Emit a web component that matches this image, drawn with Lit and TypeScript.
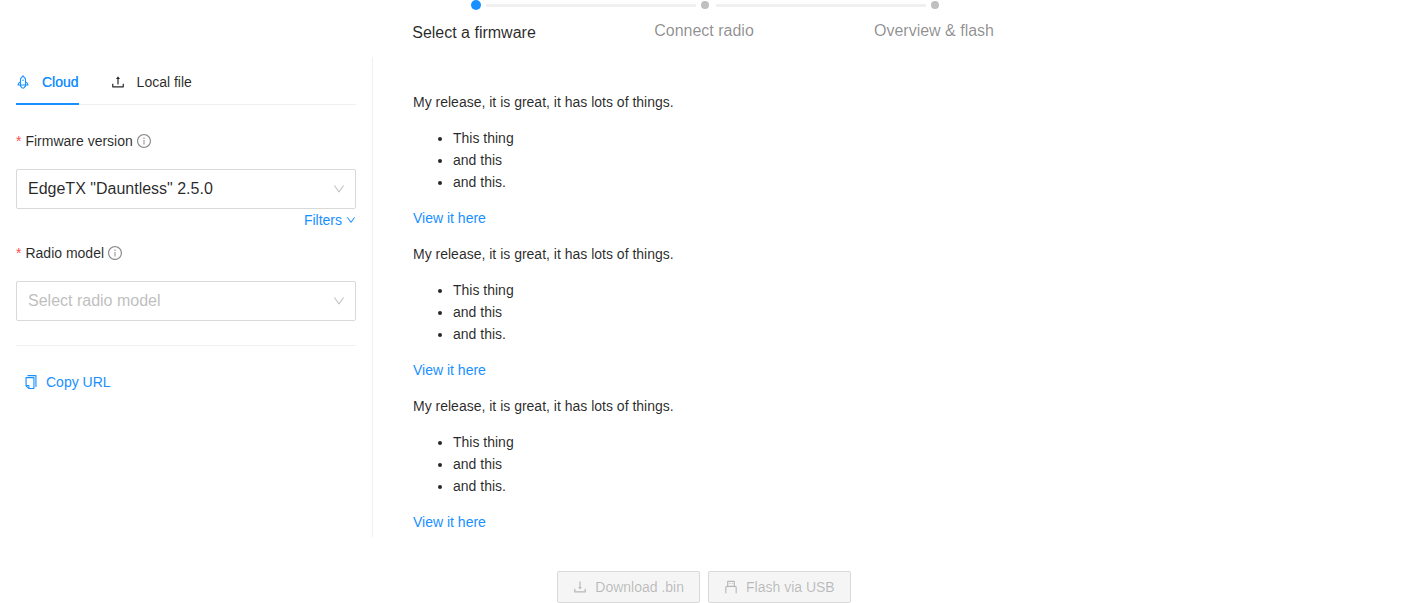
import { LitElement, html, css, svg } from "lit";
import { customElement, property, state } from "lit/decorators.js";
import { classMap } from "lit/directives/class-map.js";

const TRAY =
  "M878 626h-60c-4.4 0-8 3.6-8 8v154H214V634c0-4.4-3.6-8-8-8h-60c-4.4 0-8 3.6-8 8v198c0 17.7 14.3 32 32 32h684c17.7 0 32-14.3 32-32V634c0-4.4-3.6-8-8-8z";

const ICONS: Record<string, string[]> = {
  rocket: [
    "M864 736c0-111.6-65.4-208-160-252.9V317.3c0-15.1-5.3-29.7-15.1-41.2L536.5 95.4C530.1 87.8 521 84 512 84s-18.1 3.8-24.5 11.4L335.1 276.1a63.97 63.97 0 00-15.1 41.2v165.8C225.4 528 160 624.4 160 736h156.5c-2.3 7.2-3.5 15-3.5 23.8 0 22.1 7.6 43.7 21.4 60.8a97.2 97.2 0 0043.1 30.6c23.1 54 75.6 88.8 134.5 88.8 29.1 0 57.3-8.6 81.4-24.8 23.6-15.8 41.9-37.9 53-64a97 97 0 0043.1-30.5 97.52 97.52 0 0021.4-60.8c0-8.4-1.1-16.4-3.1-23.8H864zM762.3 621.4c9.4 14.6 17 30.3 22.5 46.6H700V558.7a211.6 211.6 0 0162.3 62.7zM388 483.1V318.8l124-147 124 147V668H388V483.1zM239.2 668c5.5-16.3 13.1-32 22.5-46.6 16.3-25.2 37.5-46.5 62.3-62.7V668h-84.8zm388.9 116.2c-5.2 3-11.2 4.2-17.1 3.4l-19.5-2.4-2.8 19.4c-5.4 37.9-38.4 66.5-76.7 66.5-38.3 0-71.3-28.6-76.7-66.5l-2.8-19.5-19.5 2.5a27.7 27.7 0 01-17.1-3.5c-8.7-5-14.1-14.3-14.1-24.4 0-10.6 5.9-19.4 14.6-23.8h231.3c8.8 4.5 14.6 13.3 14.6 23.8-.1 10.2-5.5 19.6-14.2 24.6zM464 400a48 48 0 1096 0 48 48 0 10-96 0z",
  ],
  upload: [
    "M400 317.7h73.9V656c0 4.4 3.6 8 8 8h60c4.4 0 8-3.6 8-8V317.7H624c6.7 0 10.4-7.7 6.3-12.9L518.3 163a8 8 0 00-12.6 0l-112 141.7c-4.1 5.3-.4 13 6.3 13z",
    TRAY,
  ],
  download: [
    "M505.7 661a8 8 0 0012.6 0l112-141.7c4.1-5.2.4-12.9-6.3-12.9h-74.1V168c0-4.4-3.6-8-8-8h-60c-4.4 0-8 3.6-8 8v338.3H400c-6.7 0-10.4 7.7-6.3 12.9l112 141.8z",
    TRAY,
  ],
  usb: [
    "M760 432V144c0-17.7-14.3-32-32-32H296c-17.7 0-32 14.3-32 32v288c-66.2 0-120 52.1-120 116v356c0 4.4 3.6 8 8 8h56c4.4 0 8-3.6 8-8V548c0-24.3 21.6-44 48.1-44h495.8c26.5 0 48.1 19.7 48.1 44v356c0 4.4 3.6 8 8 8h56c4.4 0 8-3.6 8-8V548c0-63.9-53.8-116-120-116zm-424 0V184h352v248H336z",
    "M456 248h-48c-4.4 0-8 3.6-8 8v48c0 4.4 3.6 8 8 8h48c4.4 0 8-3.6 8-8v-48c0-4.4-3.6-8-8-8zm160 0h-48c-4.4 0-8 3.6-8 8v48c0 4.4 3.6 8 8 8h48c4.4 0 8-3.6 8-8v-48c0-4.4-3.6-8-8-8z",
  ],
  info: [
    "M512 64C264.6 64 64 264.6 64 512s200.6 448 448 448 448-200.6 448-448S759.4 64 512 64zm0 820c-205.4 0-372-166.6-372-372s166.6-372 372-372 372 166.6 372 372-166.6 372-372 372z",
    "M464 336a48 48 0 1096 0 48 48 0 10-96 0zm72 112h-48c-4.4 0-8 3.6-8 8v272c0 4.4 3.6 8 8 8h48c4.4 0 8-3.6 8-8V456c0-4.4-3.6-8-8-8z",
  ],
  down: [
    "M884 256h-75c-5.1 0-9.9 2.5-12.9 6.6L512 654.2 227.9 262.6c-3-4.1-7.8-6.6-12.9-6.6h-75c-6.5 0-10.3 7.4-6.5 12.7l352.6 486.1c12.8 17.6 39 17.6 51.7 0l352.6-486.1c3.9-5.3.1-12.7-6.4-12.7z",
  ],
  copy: [
    "M832 64H296c-4.4 0-8 3.6-8 8v56c0 4.4 3.6 8 8 8h496v688c0 4.4 3.6 8 8 8h56c4.4 0 8-3.6 8-8V96c0-17.7-14.3-32-32-32zM704 192H192c-17.7 0-32 14.3-32 32v530.7c0 8.5 3.4 16.6 9.4 22.6l173.3 173.3c2.2 2.2 4.7 4 7.4 5.5v1.9h4.2c3.5 1.3 7.2 2 11 2H704c17.7 0 32-14.3 32-32V224c0-17.7-14.3-32-32-32zM350 856.2L263.9 770H350v86.2zM664 888H414V746c0-22.1-17.9-40-40-40H232V264h432v624z",
  ],
};

@customElement("ui-icon")
class UiIcon extends LitElement {
  @property() name = "info";

  static styles = css`
    :host {
      display: block;
      flex: none;
      width: 14px;
      height: 14px;
    }
    .glyph {
      display: block;
      width: 100%;
      height: 100%;
      fill: currentColor;
    }
  `;

  render() {
    return html`<svg class="glyph" viewBox="64 64 896 896" aria-hidden="true">
      ${ICONS[this.name].map((d) => svg`<path d=${d}></path>`)}
    </svg>`;
  }
}

@customElement("step-bar")
class StepBar extends LitElement {
  @property({ type: Number }) current = 0;

  private steps = ["Select a firmware", "Connect radio", "Overview & flash"];

  static styles = css`
    .steps {
      display: grid;
      grid-template-columns: repeat(3, 1fr);
      max-width: 690px;
      margin: 0 auto;
      padding: 0;
      list-style: none;
    }
    .track {
      display: grid;
      grid-template-columns: 15px calc(200% - 26px);
      height: 9px;
      margin-left: calc(50% - 3px);
    }
    .dot {
      width: 8px;
      height: 8px;
      margin-top: 1px;
      border-radius: 50%;
      background: #bfbfbf;
    }
    .tail {
      height: 3px;
      margin-top: 4px;
      background: #f0f0f0;
    }
    .title {
      margin-top: 10px;
      font-size: 16px;
      line-height: 24px;
      text-align: center;
      white-space: nowrap;
      color: rgba(0, 0, 0, 0.45);
    }
    .active .track {
      height: 11px;
    }
    .active .dot {
      width: 10px;
      height: 10px;
      margin-top: 0;
      background: #1890ff;
    }
    .active .title {
      color: rgba(0, 0, 0, 0.85);
    }
  `;

  render() {
    return html`<ol class="steps">
      ${this.steps.map(
        (title, i) => html`<li class=${classMap({ active: i === this.current })}>
          <div class="track">
            <span class="dot"></span>
            ${i < this.steps.length - 1 ? html`<span class="tail"></span>` : ""}
          </div>
          <div class="title">${title}</div>
        </li>`
      )}
    </ol>`;
  }
}

@customElement("app-root")
class AppRoot extends LitElement {
  @state() private tab = "cloud";
  @state() private model = "";

  private tabs = [
    { id: "cloud", icon: "rocket", label: "Cloud" },
    { id: "file", icon: "upload", label: "Local file" },
  ];
  private releases = [1, 2, 3];

  static styles = css`
    :host {
      display: block;
      font-family: "Liberation Sans", Arial, sans-serif;
      font-size: 14px;
      line-height: 22px;
      color: rgba(0, 0, 0, 0.85);
      background: #fff;
    }
    button,
    select {
      margin: 0;
      font: inherit;
      color: inherit;
    }
    button {
      display: flex;
      align-items: center;
      padding: 0;
      border: 0;
      background: none;
      cursor: pointer;
    }
    a {
      color: #1890ff;
      text-decoration: none;
    }
    .columns {
      display: flex;
      margin-top: 12px;
    }
    .sidebar {
      flex: none;
      box-sizing: border-box;
      width: 373px;
      padding: 2px 16px 0;
      border-right: 1px solid #f0f0f0;
    }
    .tabs {
      display: flex;
      gap: 32px;
      margin-bottom: 25px;
      box-shadow: inset 0 -1px #f0f0f0;
    }
    .tab {
      gap: 12px;
      padding: 12px 0;
    }
    .tab.selected {
      color: #1890ff;
      text-shadow: 0 0 currentColor;
      box-shadow: inset 0 -2px #1890ff;
    }
    .label {
      display: flex;
      align-items: center;
      gap: 4px;
      margin-bottom: 17px;
    }
    .star {
      color: #ff4d4f;
    }
    .hint {
      color: rgba(0, 0, 0, 0.45);
    }
    .picker {
      display: grid;
      align-items: center;
    }
    .picker > * {
      grid-area: 1 / 1;
    }
    .select {
      appearance: none;
      box-sizing: border-box;
      width: 100%;
      height: 40px;
      padding: 0 30px 0 11px;
      border: 1px solid #d9d9d9;
      border-radius: 2px;
      background: #fff;
      font-size: 16px;
    }
    .select.empty {
      color: #bfbfbf;
    }
    .arrow {
      justify-self: end;
      width: 12px;
      height: 12px;
      margin-right: 11px;
      color: rgba(0, 0, 0, 0.25);
      pointer-events: none;
    }
    .filters {
      gap: 4px;
      margin: 0 0 11px auto;
      color: #1890ff;
    }
    .filters ui-icon {
      width: 10px;
      height: 10px;
    }
    .divider {
      height: 1px;
      margin: 24px 0 20px;
      border: 0;
      background: #f0f0f0;
    }
    .copy {
      gap: 8px;
      padding: 5px 8px;
      color: #1890ff;
    }
    .notes {
      flex: 1;
      min-width: 0;
      padding: 34px 40px 4px;
    }
    .notes p,
    .notes ul {
      margin: 0 0 14px;
    }
    .notes ul {
      padding-left: 40px;
    }
    .notes article:last-child p:last-child {
      margin-bottom: 0;
    }
    .actions {
      display: flex;
      justify-content: center;
      gap: 8px;
      margin-top: 34px;
    }
    .action {
      gap: 8px;
      padding: 4px 15px;
      border: 1px solid #d9d9d9;
      border-radius: 2px;
      background: #f5f5f5;
      color: rgba(0, 0, 0, 0.25);
      cursor: not-allowed;
    }
  `;

  private label(id: string, text: string) {
    return html`<label class="label" for=${id}>
      <span class="star">*</span>${text}<ui-icon class="hint" name="info"></ui-icon>
    </label>`;
  }

  render() {
    return html`
      <step-bar .current=${0}></step-bar>
      <main class="columns">
        <section class="sidebar">
          <div class="tabs" role="tablist">
            ${this.tabs.map(
              (t) => html`<button
                role="tab"
                aria-selected=${t.id === this.tab ? "true" : "false"}
                class=${classMap({ tab: true, selected: t.id === this.tab })}
                @click=${() => (this.tab = t.id)}
              >
                <ui-icon name=${t.icon}></ui-icon>${t.label}
              </button>`
            )}
          </div>
          ${this.label("firmware", "Firmware version")}
          <div class="picker">
            <select id="firmware" class="select">
              <option>EdgeTX "Dauntless" 2.5.0</option>
            </select>
            <ui-icon class="arrow" name="down"></ui-icon>
          </div>
          <button class="filters">Filters<ui-icon name="down"></ui-icon></button>
          ${this.label("model", "Radio model")}
          <div class="picker">
            <select
              id="model"
              class=${classMap({ select: true, empty: !this.model })}
              @change=${(e: Event) => (this.model = (e.target as HTMLSelectElement).value)}
            >
              <option value="" selected>Select radio model</option>
            </select>
            <ui-icon class="arrow" name="down"></ui-icon>
          </div>
          <hr class="divider" />
          <button class="copy"><ui-icon name="copy"></ui-icon>Copy URL</button>
        </section>
        <section class="notes">
          ${this.releases.map(
            () => html`<article>
              <p>My release, it is great, it has lots of things.</p>
              <ul>
                <li>This thing</li>
                <li>and this</li>
                <li>and this.</li>
              </ul>
              <p><a href="#">View it here</a></p>
            </article>`
          )}
        </section>
      </main>
      <footer class="actions">
        <button class="action" disabled><ui-icon name="download"></ui-icon>Download .bin</button>
        <button class="action" disabled><ui-icon name="usb"></ui-icon>Flash via USB</button>
      </footer>
    `;
  }
}
